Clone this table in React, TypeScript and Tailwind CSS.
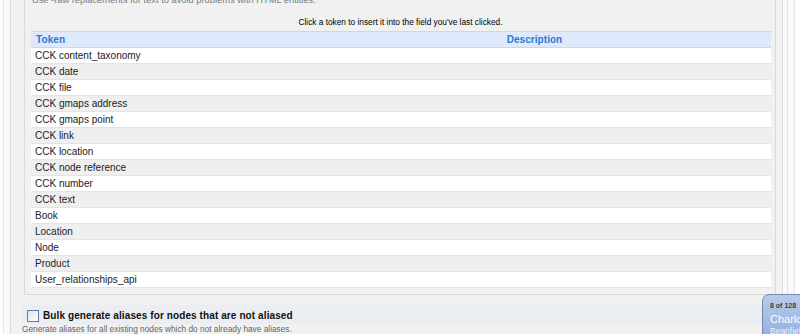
const tokens = [
  "CCK content_taxonomy",
  "CCK date",
  "CCK file",
  "CCK gmaps address",
  "CCK gmaps point",
  "CCK link",
  "CCK location",
  "CCK node reference",
  "CCK number",
  "CCK text",
  "Book",
  "Location",
  "Node",
  "Product",
  "User_relationships_api",
];

const TokenTable = () => (
  <table className="w-[740px] ml-[1px] border-collapse table-fixed">
    <thead>
      <tr className="bg-[#dfe9fb] border-t border-b border-[#c9d8f0]">
        <th className="w-[267px] h-[15px] p-0 pl-[5px] text-left text-[10px] leading-[15px] font-bold text-[#2a7bcf] tracking-[0.1px]">
          Token
        </th>
        <th className="h-[15px] p-0 text-center text-[10px] leading-[15px] font-bold text-[#2a7bcf] tracking-[0.05px]">
          Description
        </th>
      </tr>
    </thead>
    <tbody>
      {tokens.map((t, i) => (
        <tr
          key={t}
          className={`border-b border-[#dde3ef] ${i % 2 === 0 ? "bg-white" : "bg-[#efefef]"}`}
        >
          <td className="h-[15px] p-0 pl-[4px] text-[10px] leading-[15px] text-[#222]">{t}</td>
          <td className="h-[15px] p-0" />
        </tr>
      ))}
    </tbody>
  </table>
);

const PeopleWidget = () => (
  <div className="absolute left-[762px] top-[294px] w-[110px] h-[60px] rounded-tl-[7px] border border-[#7688ad] bg-gradient-to-b from-[#b7cbec] to-[#89a5d8] pl-[7px] pt-[6px]">
    <div className="text-[7px] leading-[9px] font-bold text-[#3a3f4a]">8 of 128</div>
    <div className="mt-[3px] text-[11px] leading-[13px] text-white">Charlotte</div>
    <div className="text-[8.5px] leading-[10px] text-[#eef3fb]">Beanfield</div>
  </div>
);

export default function App() {
  return (
    <div
      className="relative w-[800px] h-[334px] overflow-hidden bg-white"
      style={{ fontFamily: '"Liberation Sans", Arial, sans-serif' }}
    >
      <div className="h-full ml-[3px] mr-[5px] flex border-l border-r border-[#e6e6e6] bg-[#f9f9f9] pl-[6px] pr-[6px]">
        <div className="flex-1 h-full border-l border-r border-[#dcdcdc] bg-[#f1f1f1] pl-[13px] pr-[6px]">
          {/* token fieldset */}
          <div className="w-[752px] h-[295px] flex flex-col border-l border-r border-b border-[#d9d9d9] pl-[5px] pr-[4px]">
            <div className="mt-[-6px] pl-[2px] text-[9.3px] leading-[12px] text-[#7b7b7b]">
              Use -raw replacements for text to avoid problems with HTML entities.
            </div>
            <div className="mt-[11px] text-center text-[8.3px] leading-[10px] text-black">
              Click a token to insert it into the field you've last clicked.
            </div>
            <div className="mt-[4px]">
              <TokenTable />
            </div>
          </div>

          {/* bulk update option */}
          <div className="mt-[10px] ml-[-2px] w-[750px] h-[19px] bg-[#eaeef2] flex items-center pl-[5px]">
            <span className="w-[12px] h-[12px] mt-[2px] border border-[#5f7fa8] bg-gradient-to-br from-[#dfe4ea] to-white" />
            <span className="ml-[4px] mt-[2px] text-[10px] font-bold text-[#111] tracking-[0.1px]">
              Bulk generate aliases for nodes that are not aliased
            </span>
          </div>
          <div className="ml-[-2px] text-[8.3px] leading-[10px] text-[#666]">
            Generate aliases for all existing nodes which do not already have aliases.
          </div>
        </div>
        <div className="w-[6px] h-full border-r border-[#e2e2e2]" />
      </div>
      <PeopleWidget />
    </div>
  );
}
